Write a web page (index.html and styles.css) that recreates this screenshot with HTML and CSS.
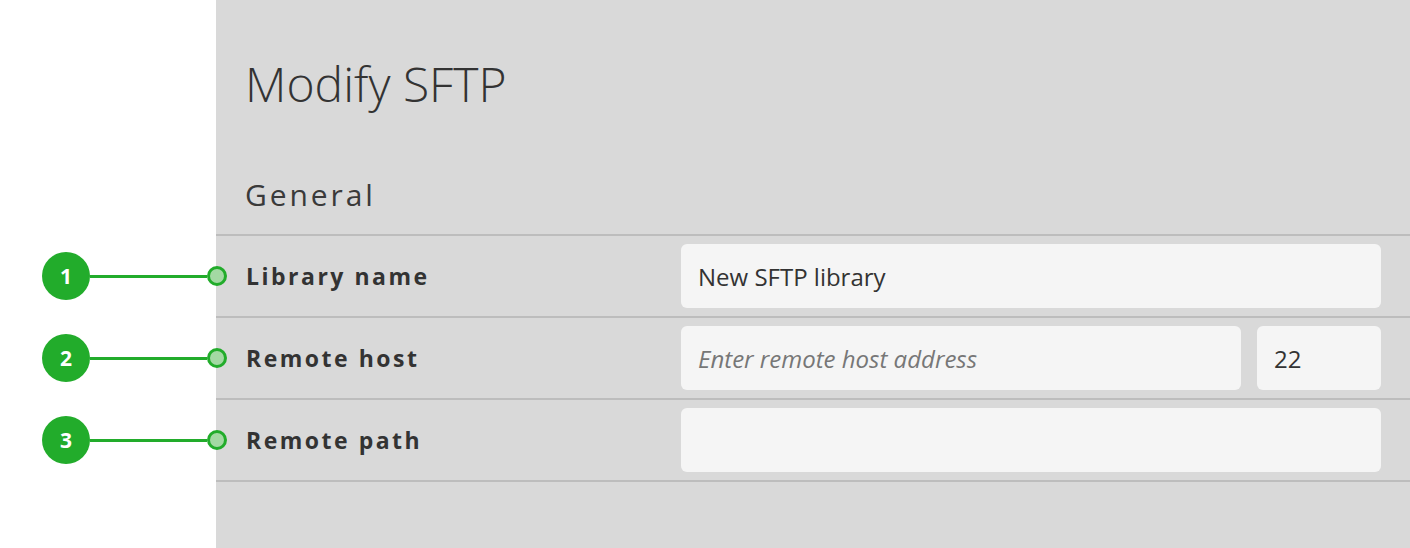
FILE: index.html
```html
<!DOCTYPE html>
<html>

<head>
    <meta charset="UTF-8">
    <title>Modify SFTP</title>
    <link rel="stylesheet" href="styles.css">
</head>

<body>

    <div class="page">
        <div class="gutter"></div>

        <div class="panel">
            <h1>Modify SFTP</h1>
            <h2>General</h2>

            <div class="rows">
                <div class="row">
                    <div class="callout"><span class="badge">1</span><span class="line"></span><span class="dot"></span></div>
                    <label for="libName">Library name</label>
                    <div class="fields">
                        <input id="libName" type="text" value="New SFTP library">
                    </div>
                </div>

                <div class="row">
                    <div class="callout"><span class="badge">2</span><span class="line"></span><span class="dot"></span></div>
                    <label for="host">Remote host</label>
                    <div class="fields">
                        <input id="host" type="text" placeholder="Enter remote host address">
                        <input id="port" class="port" type="text" value="22">
                    </div>
                </div>

                <div class="row">
                    <div class="callout"><span class="badge">3</span><span class="line"></span><span class="dot"></span></div>
                    <label for="path">Remote path</label>
                    <div class="fields">
                        <input id="path" type="text">
                    </div>
                </div>
            </div>
        </div>
    </div>

</body>

</html>
```

FILE: styles.css
```css
/* Basic Reset */
* {
    box-sizing: border-box;
    margin: 0;
    padding: 0;
}

body {
    font-family: "Open Sans", sans-serif;
    background: #fff;
    color: #333;
    width: 1410px;
    height: 548px;
    overflow: hidden;
}

.page {
    display: flex;
    height: 548px;
}

.gutter {
    width: 216px;
    flex-shrink: 0;
    background: #fff;
}

.panel {
    flex: 1;
    background: #d9d9d9;
    padding-top: 50px;
}

h1,
h2 {
    padding-left: 29px;
}

h1 {
    font-weight: 300;
    font-size: 48px;
    line-height: 68px;
    color: #333;
}

h2 {
    margin-top: 57px;
    font-weight: 400;
    font-size: 30px;
    line-height: 40px;
    letter-spacing: 2.9px;
    color: #3a3a3a;
    margin-bottom: 19px;
}

.rows {
    border-top: 2px solid #bdbdbd;
}

.row {
    position: relative;
    display: flex;
    align-items: center;
    height: 82px;
    padding: 0 29px 0 30px;
    border-bottom: 2px solid #bdbdbd;
}

label {
    width: 435px;
    flex-shrink: 0;
    font-weight: 700;
    font-size: 23px;
    letter-spacing: 2.5px;
    color: #333;
}

.fields {
    flex: 1;
    display: flex;
    gap: 16px;
}

input[type="text"] {
    flex: 1;
    min-width: 0;
    height: 64px;
    padding: 0 17px;
    border: none;
    border-radius: 6px;
    background: #f5f5f5;
    font-family: "Open Sans", sans-serif;
    font-size: 24px;
    color: #333;
    outline: none;
}

input::placeholder {
    font-style: italic;
    color: #777;
}

input.port {
    flex: 0 0 124px;
}

/* numbered annotation sitting over the panel edge */
.callout {
    position: absolute;
    left: -174px;
    top: 50%;
    transform: translateY(-50%);
    display: flex;
    align-items: center;
}

.badge {
    width: 48px;
    height: 48px;
    border-radius: 50%;
    background: #22ac2b;
    color: #fff;
    font-weight: 700;
    font-size: 21px;
    display: flex;
    align-items: center;
    justify-content: center;
}

.line {
    width: 117px;
    height: 3px;
    background: #22ac2b;
}

.dot {
    width: 20px;
    height: 20px;
    border-radius: 50%;
    border: 3px solid #22ac2b;
    background: #a3d9a3;
}
```
